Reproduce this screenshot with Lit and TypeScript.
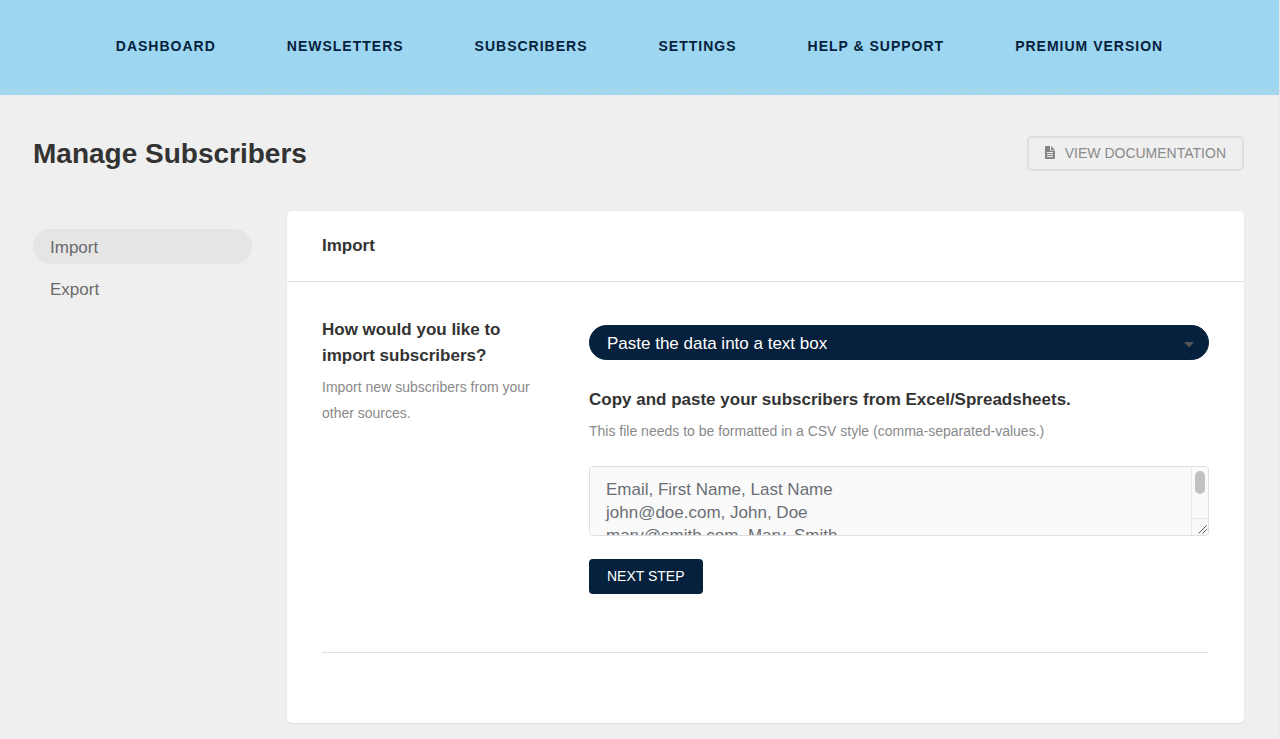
import { LitElement, html, css } from "lit";
import { customElement, state } from "lit/decorators.js";

const NAV = ["Dashboard", "Newsletters", "Subscribers", "Settings", "Help & Support", "Premium Version"];

@customElement("app-root")
export class AppRoot extends LitElement {
  static styles = css`
    :host {
      display: block;
      box-sizing: border-box;
      min-height: 100vh;
      background: #efefef;
      border-right: 1px solid #e8e8e8;
      color: #333;
      font: 17px/26px "Liberation Sans", Arial, sans-serif;
    }
    *, *::before, *::after { box-sizing: border-box; }
    h1, h2, h3, p { margin: 0; }
    .top { background: #9cd6f0; }
    .top::after {
      content: "";
      display: block;
      height: 8px;
      background: repeating-linear-gradient(135deg, #a9d8e8 0 1px, #9cd6f0 2px 3px, #a9d8e8 4px);
    }
    .nav {
      display: flex;
      justify-content: center;
      gap: 71px;
      padding: 33px 0 28px;
    }
    .nav-link {
      color: #06213d;
      font-size: 14px;
      font-weight: bold;
      letter-spacing: 1px;
      text-transform: uppercase;
      text-decoration: none;
      white-space: nowrap;
    }
    .page { padding: 41px 35px 16px 33px; }
    .head {
      display: flex;
      justify-content: space-between;
      align-items: center;
      margin-bottom: 40px;
    }
    .title { font-size: 28px; line-height: 35px; }
    .doc {
      display: flex;
      align-items: center;
      gap: 10px;
      height: 35px;
      padding: 0 16px 2px;
      border: 2px solid #dedede;
      border-radius: 5px;
      color: #8a8a8a;
      font-size: 14px;
      text-transform: uppercase;
      text-decoration: none;
    }
    .body {
      display: grid;
      grid-template-columns: 219px 1fr;
      gap: 35px;
      align-items: start;
    }
    .side {
      display: grid;
      gap: 7px;
      padding-top: 18px;
    }
    .side-link {
      padding: 6px 17px 3px;
      border-radius: 18px;
      color: #6a6a6a;
      text-decoration: none;
    }
    .side-link.active { background: #e5e5e5; }
    .card {
      background: #fff;
      border-radius: 5px;
      box-shadow: 0 1px 2px #ddd;
    }
    .card-title {
      padding: 22px 35px;
      border-bottom: 1px solid #e2e2e2;
      font-size: 17px;
      line-height: 26px;
    }
    .row {
      display: grid;
      grid-template-columns: 232px 1fr;
      gap: 35px;
      margin: 0 35px;
      padding: 35px 0 58px;
      border-bottom: 1px solid #e2e2e2;
    }
    .foot { height: 70px; }
    .label { display: block; font-size: 17px; font-weight: bold; line-height: 26px; }
    .hint { padding-top: 5px; color: #8a8a8a; font-size: 14px; line-height: 26px; }
    .fields { padding-top: 8px; }
    .picker { position: relative; margin-bottom: 27px; }
    .select {
      display: block;
      width: 100%;
      height: 35px;
      padding: 2px 40px 0 17px;
      border: 1px solid #06213d;
      border-radius: 18px;
      background: #06213d;
      color: #fff;
      font: inherit;
      appearance: none;
    }
    .arrow { position: absolute; right: 15px; top: 17px; pointer-events: none; }
    .paste { position: relative; margin: 22px 0 23px; }
    .text {
      display: block;
      width: 100%;
      height: 70px;
      padding: 11px 16px;
      border: 1px solid #dedede;
      border-radius: 4px;
      background: #fafafa;
      color: #6a6e74;
      font: inherit;
      line-height: 23px;
      resize: none;
    }
    .text::placeholder { color: #6a6e74; }
    .bar {
      position: absolute;
      inset: 1px 1px 1px auto;
      display: flex;
      flex-direction: column;
      width: 17px;
      border-left: 1px solid #e8e8e8;
      pointer-events: none;
    }
    .track { flex: 1; padding: 4px 3px; }
    .thumb { height: 23px; border-radius: 5px; background: #c1c1c1; }
    .grip {
      display: flex;
      justify-content: flex-end;
      align-items: flex-end;
      height: 17px;
      padding: 1px;
      border-top: 1px solid #e8e8e8;
    }
    .next {
      display: block;
      height: 35px;
      padding: 0 18px 2px;
      border: 0;
      border-radius: 4px;
      background: #06213d;
      color: #fff;
      font: inherit;
      font-size: 14px;
      text-transform: uppercase;
    }
  `;

  @state() private section = "Import";

  private pick(e: Event, name: string) {
    e.preventDefault();
    this.section = name;
  }

  render() {
    return html`
      <header class="top">
        <nav class="nav">${NAV.map((n) => html`<a class="nav-link" href="#">${n}</a>`)}</nav>
      </header>
      <main class="page">
        <div class="head">
          <h1 class="title">Manage Subscribers</h1>
          <a class="doc" href="#">
            <svg width="10" height="13" viewBox="0 0 10 13" aria-hidden="true">
              <path fill="#858585" fill-rule="evenodd" d="M0 1Q0 0 1 0H5V4.5H10V12Q10 13 9 13H1Q0 13 0 12ZM2 6V7H8V6ZM2 8V9H8V8ZM2 10V11H8V10ZM6 0L10 3.7H6Z"/>
            </svg>
            View Documentation
          </a>
        </div>
        <div class="body">
          <nav class="side">
            ${["Import", "Export"].map(
              (n) => html`<a class="side-link ${this.section === n ? "active" : ""}" href="#" @click=${(e: Event) => this.pick(e, n)}>${n}</a>`
            )}
          </nav>
          <section class="card">
            <h2 class="card-title">${this.section}</h2>
            <div class="row">
              <div>
                <label class="label" for="method">How would you like to import subscribers?</label>
                <p class="hint">Import new subscribers from your other sources.</p>
              </div>
              <div class="fields">
                <div class="picker">
                  <select class="select" id="method">
                    <option>Paste the data into a text box</option>
                    <option>Upload a file</option>
                  </select>
                  <svg class="arrow" width="10" height="6" viewBox="0 0 10 6" aria-hidden="true"><path fill="#555" d="M0 0H10L5 5.5Z"/></svg>
                </div>
                <label class="label" for="data">Copy and paste your subscribers from Excel/Spreadsheets.</label>
                <p class="hint">This file needs to be formatted in a CSV style (comma-separated-values.)</p>
                <div class="paste">
                  <textarea class="text" id="data" placeholder=${"Email, First Name, Last Name\njohn@doe.com, John, Doe\nmary@smith.com, Mary, Smith\njohnny@walker.com, Johnny, Walker"}></textarea>
                  <div class="bar" aria-hidden="true">
                    <div class="track"><div class="thumb"></div></div>
                    <div class="grip">
                      <svg width="9" height="9" viewBox="0 0 9 9"><path d="M0.5 8.5L8.5 0.5M4.5 8.5L8.5 4.5" stroke="#555" stroke-width="1" fill="none"/></svg>
                    </div>
                  </div>
                </div>
                <button class="next" type="button">Next step</button>
              </div>
            </div>
            <div class="foot"></div>
          </section>
        </div>
      </main>
    `;
  }
}
